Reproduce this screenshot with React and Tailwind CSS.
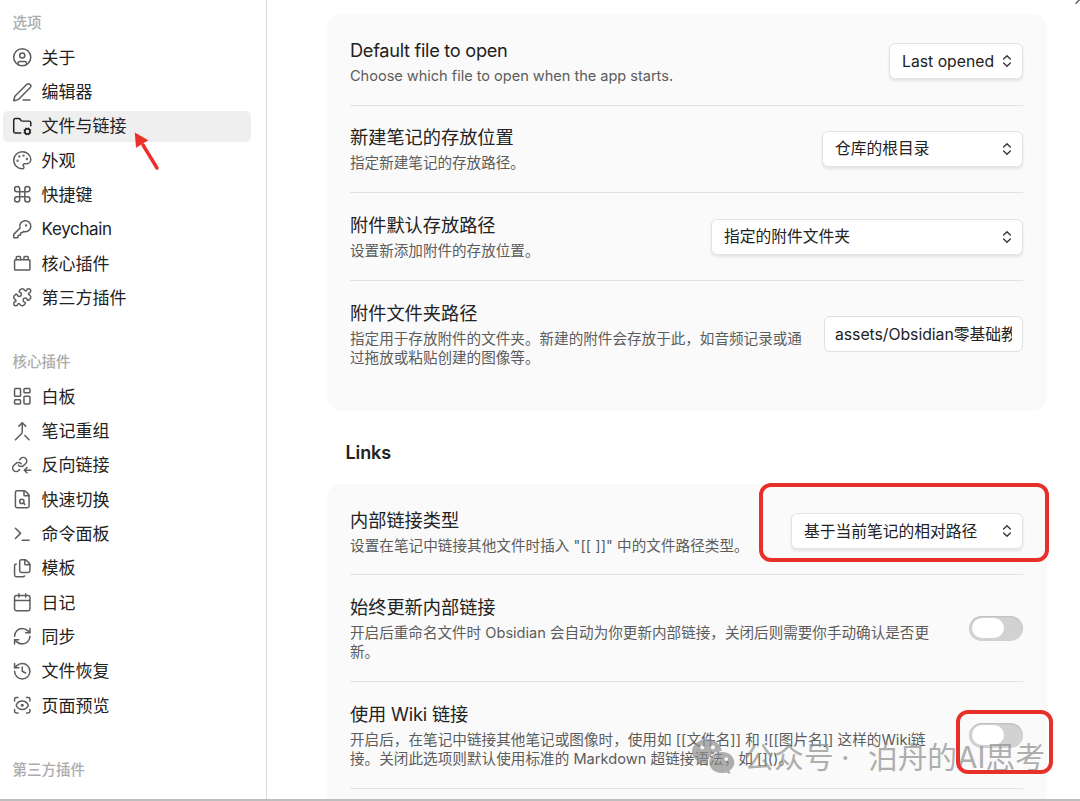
import { useState } from 'react';
import {
  Calendar,
  ChevronsUpDown,
  CircleUser,
  Command,
  Files,
  FileSearch,
  FolderCog,
  History,
  KeyRound,
  LayoutDashboard,
  Merge,
  Palette,
  PenLine,
  Puzzle,
  RefreshCw,
  ScanEye,
  Terminal,
  ToyBrick,
} from 'lucide-react';

// Not part of lucide: chain link with an incoming arrow
function BacklinkIcon({ className, strokeWidth }) {
  return (
    <svg
      className={className}
      viewBox="0 0 24 24"
      fill="none"
      stroke="currentColor"
      strokeWidth={strokeWidth}
      strokeLinecap="round"
      strokeLinejoin="round"
    >
      <path d="M7.4 11.9a4.100 4.100 0 0 0 6.200.45l2.500-2.500a4.100 4.100 0 0 0-5.800-5.800l-1.400 1.400" />
      <path d="M10.700 10.300a4.100 4.100 0 0 0-6.200-.45l-2.500 2.500a4.100 4.100 0 0 0 5.800 5.800l1-1" />
      <path d="M22 17.800h-7.500" />
      <path d="m17.500 14.800-3 3 3 3" />
    </svg>
  );
}

const optionItems = [
  { id: 'about', label: '关于', icon: CircleUser },
  { id: 'editor', label: '编辑器', icon: PenLine },
  { id: 'file', label: '文件与链接', icon: FolderCog },
  { id: 'appearance', label: '外观', icon: Palette },
  { id: 'hotkeys', label: '快捷键', icon: Command },
  { id: 'keychain', label: 'Keychain', icon: KeyRound },
  { id: 'plugins', label: '核心插件', icon: ToyBrick },
  { id: 'community', label: '第三方插件', icon: Puzzle },
];

const coreItems = [
  { id: 'canvas', label: '白板', icon: LayoutDashboard },
  { id: 'composer', label: '笔记重组', icon: Merge },
  { id: 'backlink', label: '反向链接', icon: BacklinkIcon },
  { id: 'switcher', label: '快速切换', icon: FileSearch },
  { id: 'command', label: '命令面板', icon: Terminal },
  { id: 'templates', label: '模板', icon: Files },
  { id: 'daily', label: '日记', icon: Calendar },
  { id: 'sync', label: '同步', icon: RefreshCw },
  { id: 'recovery', label: '文件恢复', icon: History },
  { id: 'preview', label: '页面预览', icon: ScanEye },
];

function NavGroup({ items, active, onSelect }) {
  return (
    <nav className="flex flex-col gap-[3.3px] pl-[3px] pr-[15px]">
      {items.map(({ id, label, icon: Icon }) => (
        <button
          key={id}
          onClick={() => onSelect(id)}
          className={`flex h-[31px] w-full items-center gap-[9.5px] rounded-[5px] pl-[8.5px] text-left text-[17px] leading-[31px] text-[#222222] ${
            active === id ? 'bg-[#efefef]' : ''
          }`}
        >
          <Icon
            className={`h-[20.5px] w-[20.5px] shrink-0 ${active === id ? 'text-[#222222]' : 'text-[#5c5c5c]'}`}
            strokeWidth={1.75}
          />
          <span className={`pt-[1.6px] ${id === 'keychain' ? 'tracking-[-0.34px]' : ''}`}>{label}</span>
        </button>
      ))}
    </nav>
  );
}

function NavHeading({ children }) {
  return <h3 className="pl-[12.5px] text-[14.5px] font-medium leading-[20px] text-[#ababab]">{children}</h3>;
}

function Dropdown({ value, className }) {
  return (
    <button
      className={`flex h-[36px] shrink-0 items-center justify-between rounded-[6px] border border-[#e4e4e4] bg-white pl-[12px] pr-[7px] text-[15.75px] text-[#222222] shadow-[0_2px_3px_rgba(0,0,0,0.09)] ${className}`}
    >
      <span className="whitespace-nowrap pt-px">{value}</span>
      <ChevronsUpDown className="h-[16px] w-[16px] text-[#333333]" strokeWidth={2} />
    </button>
  );
}

function Toggle() {
  const [on, setOn] = useState(false);
  return (
    <button
      onClick={() => setOn(!on)}
      className={`flex h-[25px] w-[54px] shrink-0 items-center rounded-full px-[2.5px] shadow-[inset_0_1px_2px_rgba(0,0,0,0.1)] ${
        on ? 'justify-end bg-[#8a5cf5]' : 'bg-[#d2d2d2]'
      }`}
    >
      <span className="h-[20px] w-[32px] rounded-full bg-white" />
    </button>
  );
}

function SettingRow({ title, lines, titleClass = '', lineClass = '', className = '', children }) {
  return (
    <div className={`flex items-center justify-between border-b border-[#e2e2e2] ${className}`}>
      <div className="min-w-0">
        <div className={`whitespace-nowrap text-[18.2px] leading-[24px] text-[#222222] ${titleClass}`}>{title}</div>
        <div className={`-mb-px pt-[5px] text-[14.58px] leading-[19px] text-[#5c5c5c] ${lineClass}`}>
          {lines.map((line) => (
            <p key={line} className="whitespace-nowrap">
              {line}
            </p>
          ))}
        </div>
      </div>
      {children}
    </div>
  );
}

function WechatMark() {
  return (
    <svg className="h-[35px] w-[43px] shrink-0" viewBox="0 0 43 35">
      <path
        fill="#8f8f8f"
        fillRule="evenodd"
        d="M15.5 0C7 0 0 5.6 0 12.6c0 4 2.2 7.4 5.7 9.7L4.3 26.6l5-2.5c1.8.5 3.9.9 6.2.9-.4-7 6-12.6 14.3-12.9C28.6 5 22.5 0 15.5 0ZM10.3 6.2a2.1 2.1 0 1 1 0 4.2 2.1 2.1 0 0 1 0-4.2Zm10.6 0a2.1 2.1 0 1 1 0 4.2 2.1 2.1 0 0 1 0-4.2Z"
      />
      <path
        fill="#8f8f8f"
        fillRule="evenodd"
        d="M30 13c-7.3 0-12.8 4.8-12.8 10.5S22.7 34 30 34c1.6 0 3-.2 4.4-.6l4.1 1.9-1.1-3.6c3.1-1.9 5-4.9 5-8.2C42.4 17.8 37 13 30 13Zm-4.3 5.300a1.800 1.800 0 1 1 0 3.600 1.800 1.800 0 0 1 0-3.600Zm8.600 0a1.800 1.800 0 1 1 0 3.600 1.800 1.800 0 0 1 0-3.600Z"
      />
    </svg>
  );
}

export default function App() {
  const [active, setActive] = useState('file');

  return (
    <div
      lang="zh-CN"
      className="relative flex h-[801px] w-[1080px] overflow-hidden border-b-2 border-[#bdbdbd] bg-white font-['Inter','Noto_Sans_CJK_SC',sans-serif]"
    >
      {/* Sidebar */}
      <aside className="w-[267px] shrink-0 border-r border-[#dcdcdc] pt-[13px]">
        <NavHeading>选项</NavHeading>
        <div className="pt-[9px]">
          <NavGroup items={optionItems} active={active} onSelect={setActive} />
        </div>
        <div className="pt-[38.5px]">
          <NavHeading>核心插件</NavHeading>
        </div>
        <div className="pt-[9.5px]">
          <NavGroup items={coreItems} active={active} onSelect={setActive} />
        </div>
        <div className="pt-[39px]">
          <NavHeading>第三方插件</NavHeading>
        </div>
      </aside>

      {/* Settings content */}
      <main className="flex-1 pl-[60px] pr-[33px] pt-[14px]">
        <section className="h-[397px] rounded-[14px] bg-[#fafafa] pl-[23px] pr-[24px] pt-[4px]">
          <SettingRow
            title="Default file to open"
            lines={['Choose which file to open when the app starts.']}
            titleClass="tracking-[-0.29px]"
            lineClass="tracking-[-0.03px]"
            className="h-[87.5px]"
          >
            <Dropdown value="Last opened" className="w-[134px]" />
          </SettingRow>
          <SettingRow title="新建笔记的存放位置" lines={['指定新建笔记的存放路径。']} className="h-[87.5px]">
            <Dropdown value="仓库的根目录" className="w-[201px]" />
          </SettingRow>
          <SettingRow title="附件默认存放路径" lines={['设置新添加附件的存放位置。']} className="h-[88px]">
            <Dropdown value="指定的附件文件夹" className="w-[312px]" />
          </SettingRow>
          <SettingRow
            title="附件文件夹路径"
            lines={['指定用于存放附件的文件夹。新建的附件会存放于此，如音频记录或通', '过拖放或粘贴创建的图像等。']}
            className="h-[106px] border-b-0"
          >
            <div className="h-[36px] w-[199px] shrink-0 rounded-[6px] border border-[#e0e0e0] bg-white px-[10px] text-[15.8px] leading-[35px] text-[#222222]">
              <div className="overflow-hidden whitespace-nowrap tracking-[-0.05px]">assets/Obsidian零基础教程</div>
            </div>
          </SettingRow>
        </section>

        <h2 className="pl-[18.5px] pt-[29px] text-[18px] font-semibold leading-[25px] tracking-[-0.1px] text-[#222222]">
          Links
        </h2>

        <section className="mt-[19px] h-[330px] rounded-[14px] bg-[#fafafa] pl-[23px] pr-[24px] pt-[4px]">
          <SettingRow
            title="内部链接类型"
            lines={['设置在笔记中链接其他文件时插入 "[[ ]]" 中的文件路径类型。']}
            lineClass="tracking-[0.05px]"
            className="h-[87px]"
          >
            <Dropdown value="基于当前笔记的相对路径" className="w-[232px]" />
          </SettingRow>
          <SettingRow
            title="始终更新内部链接"
            lines={['开启后重命名文件时 Obsidian 会自动为你更新内部链接，关闭后则需要你手动确认是否更', '新。']}
            className="h-[107px]"
          >
            <Toggle />
          </SettingRow>
          <SettingRow
            title="使用 Wiki 链接"
            lines={['开启后，在笔记中链接其他笔记或图像时，使用如 [[文件名]] 和 ![[图片名]] 这样的Wiki链', '接。关闭此选项则默认使用标准的 Markdown 超链接语法，如 []()。']}
            titleClass="tracking-[-0.16px]"
            lineClass="tracking-[0.04px]"
            className="h-[107px]"
          >
            <Toggle />
          </SettingRow>
        </section>
      </main>

      {/* Close button, cut off by the window corner */}
      <svg className="absolute right-0 top-0 h-[5px] w-[5px]" viewBox="0 0 5 5">
        <path d="M0.5 3.8 5-0.7" stroke="#555555" strokeWidth="1.3" fill="none" />
      </svg>

      {/* Watermark */}
      <div className="absolute left-[692px] top-[739px] flex items-start opacity-70">
        <WechatMark />
        <span className="ml-[9px] flex whitespace-nowrap text-[29.7px] leading-[36px] text-[#8f8f8f]">
          <span className="w-[97px] tracking-[0.3px]">公众号</span>
          <span className="w-[27px]">·</span>
          <span>泊舟的AI思考</span>
        </span>
      </div>

      {/* Annotations */}
      <svg className="absolute left-[130px] top-[128px] h-[46px] w-[34px]" viewBox="0 0 34 46">
        <path d="M13 17 27 40" stroke="#ea3029" strokeWidth="3.4" strokeLinecap="round" fill="none" />
        <path d="M4.8 4.5 18.3 12.3 6 19.7Z" fill="#ea3029" />
      </svg>
      <div className="absolute left-[759px] top-[483px] h-[79px] w-[290px] rounded-[12px] border-4 border-[#e7302a]" />
      <div className="absolute left-[956px] top-[710px] h-[64px] w-[97px] rounded-[12px] border-4 border-[#e7302a]" />
    </div>
  );
}
